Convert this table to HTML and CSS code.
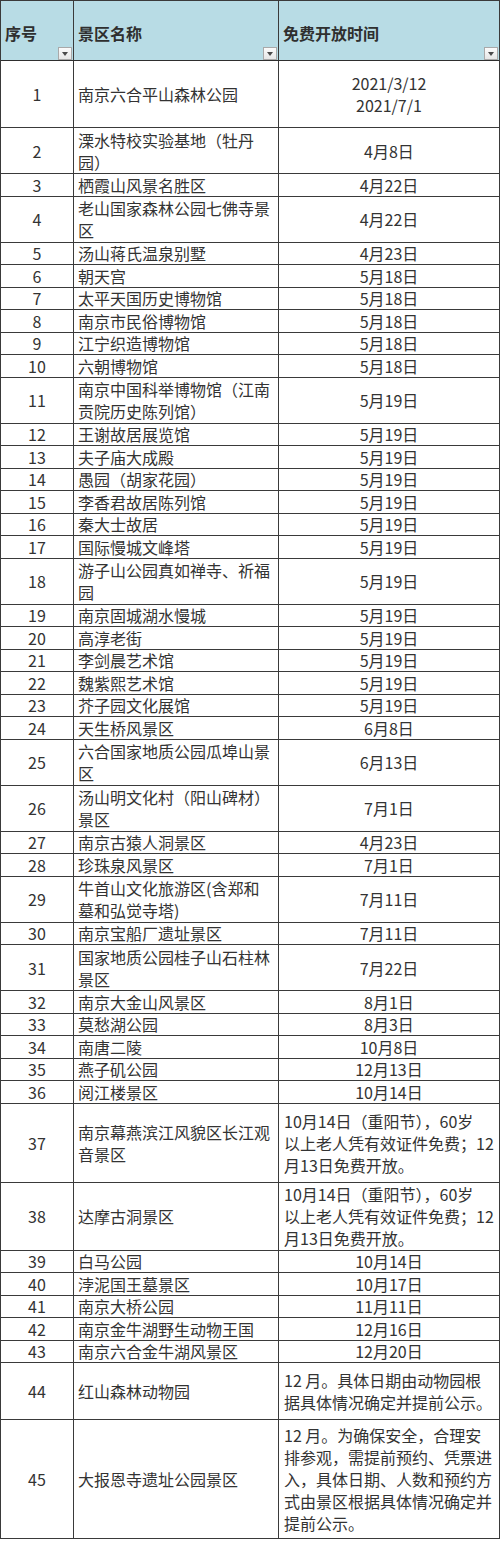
FILE: index.html
```html
<!DOCTYPE html>
<html lang="zh-CN">
<head>
<meta charset="utf-8">
<title>南京景区免费开放时间</title>
<link rel="stylesheet" href="styles.css">
</head>
<body>
<div class="table">
  <div class="row head">
    <div class="cell hc">序号<span class="filter"></span></div>
    <div class="cell hc">景区名称<span class="filter"></span></div>
    <div class="cell hc">免费开放时间<span class="filter"></span></div>
  </div>
  <div class="row h67"><div class="cell num">1</div><div class="cell name">南京六合平山森林公园</div><div class="cell date">2021/3/12<br>2021/7/1</div></div>
  <div class="row h2"><div class="cell num">2</div><div class="cell name">溧水特校实验基地（牡丹<br>园）</div><div class="cell date">4月8日</div></div>
  <div class="row"><div class="cell num">3</div><div class="cell name">栖霞山风景名胜区</div><div class="cell date">4月22日</div></div>
  <div class="row h2"><div class="cell num">4</div><div class="cell name">老山国家森林公园七佛寺景<br>区</div><div class="cell date">4月22日</div></div>
  <div class="row"><div class="cell num">5</div><div class="cell name">汤山蒋氏温泉别墅</div><div class="cell date">4月23日</div></div>
  <div class="row"><div class="cell num">6</div><div class="cell name">朝天宫</div><div class="cell date">5月18日</div></div>
  <div class="row"><div class="cell num">7</div><div class="cell name">太平天国历史博物馆</div><div class="cell date">5月18日</div></div>
  <div class="row"><div class="cell num">8</div><div class="cell name">南京市民俗博物馆</div><div class="cell date">5月18日</div></div>
  <div class="row"><div class="cell num">9</div><div class="cell name">江宁织造博物馆</div><div class="cell date">5月18日</div></div>
  <div class="row"><div class="cell num">10</div><div class="cell name">六朝博物馆</div><div class="cell date">5月18日</div></div>
  <div class="row h2"><div class="cell num">11</div><div class="cell name">南京中国科举博物馆（江南<br>贡院历史陈列馆）</div><div class="cell date">5月19日</div></div>
  <div class="row"><div class="cell num">12</div><div class="cell name">王谢故居展览馆</div><div class="cell date">5月19日</div></div>
  <div class="row"><div class="cell num">13</div><div class="cell name">夫子庙大成殿</div><div class="cell date">5月19日</div></div>
  <div class="row"><div class="cell num">14</div><div class="cell name">愚园（胡家花园）</div><div class="cell date">5月19日</div></div>
  <div class="row"><div class="cell num">15</div><div class="cell name">李香君故居陈列馆</div><div class="cell date">5月19日</div></div>
  <div class="row"><div class="cell num">16</div><div class="cell name">秦大士故居</div><div class="cell date">5月19日</div></div>
  <div class="row"><div class="cell num">17</div><div class="cell name">国际慢城文峰塔</div><div class="cell date">5月19日</div></div>
  <div class="row h2"><div class="cell num">18</div><div class="cell name">游子山公园真如禅寺、祈福<br>园</div><div class="cell date">5月19日</div></div>
  <div class="row"><div class="cell num">19</div><div class="cell name">南京固城湖水慢城</div><div class="cell date">5月19日</div></div>
  <div class="row"><div class="cell num">20</div><div class="cell name">高淳老街</div><div class="cell date">5月19日</div></div>
  <div class="row"><div class="cell num">21</div><div class="cell name">李剑晨艺术馆</div><div class="cell date">5月19日</div></div>
  <div class="row"><div class="cell num">22</div><div class="cell name">魏紫熙艺术馆</div><div class="cell date">5月19日</div></div>
  <div class="row"><div class="cell num">23</div><div class="cell name">芥子园文化展馆</div><div class="cell date">5月19日</div></div>
  <div class="row"><div class="cell num">24</div><div class="cell name">天生桥风景区</div><div class="cell date">6月8日</div></div>
  <div class="row h2"><div class="cell num">25</div><div class="cell name">六合国家地质公园瓜埠山景<br>区</div><div class="cell date">6月13日</div></div>
  <div class="row h2"><div class="cell num">26</div><div class="cell name">汤山明文化村（阳山碑材）<br>景区</div><div class="cell date">7月1日</div></div>
  <div class="row"><div class="cell num">27</div><div class="cell name">南京古猿人洞景区</div><div class="cell date">4月23日</div></div>
  <div class="row"><div class="cell num">28</div><div class="cell name">珍珠泉风景区</div><div class="cell date">7月1日</div></div>
  <div class="row h2"><div class="cell num">29</div><div class="cell name">牛首山文化旅游区(含郑和<br>墓和弘觉寺塔)</div><div class="cell date">7月11日</div></div>
  <div class="row"><div class="cell num">30</div><div class="cell name">南京宝船厂遗址景区</div><div class="cell date">7月11日</div></div>
  <div class="row h2"><div class="cell num">31</div><div class="cell name">国家地质公园桂子山石柱林<br>景区</div><div class="cell date">7月22日</div></div>
  <div class="row"><div class="cell num">32</div><div class="cell name">南京大金山风景区</div><div class="cell date">8月1日</div></div>
  <div class="row"><div class="cell num">33</div><div class="cell name">莫愁湖公园</div><div class="cell date">8月3日</div></div>
  <div class="row"><div class="cell num">34</div><div class="cell name">南唐二陵</div><div class="cell date">10月8日</div></div>
  <div class="row"><div class="cell num">35</div><div class="cell name">燕子矶公园</div><div class="cell date">12月13日</div></div>
  <div class="row"><div class="cell num">36</div><div class="cell name">阅江楼景区</div><div class="cell date">10月14日</div></div>
  <div class="row h79"><div class="cell num">37</div><div class="cell name">南京幕燕滨江风貌区长江观<br>音景区</div><div class="cell note">10月14日（重阳节），60岁<br>以上老人凭有效证件免费；12<br>月13日免费开放。</div></div>
  <div class="row h68"><div class="cell num">38</div><div class="cell name">达摩古洞景区</div><div class="cell note">10月14日（重阳节），60岁<br>以上老人凭有效证件免费；12<br>月13日免费开放。</div></div>
  <div class="row"><div class="cell num">39</div><div class="cell name">白马公园</div><div class="cell date">10月14日</div></div>
  <div class="row"><div class="cell num">40</div><div class="cell name">浡泥国王墓景区</div><div class="cell date">10月17日</div></div>
  <div class="row"><div class="cell num">41</div><div class="cell name">南京大桥公园</div><div class="cell date">11月11日</div></div>
  <div class="row"><div class="cell num">42</div><div class="cell name">南京金牛湖野生动物王国</div><div class="cell date">12月16日</div></div>
  <div class="row"><div class="cell num">43</div><div class="cell name">南京六合金牛湖风景区</div><div class="cell date">12月20日</div></div>
  <div class="row h57"><div class="cell num">44</div><div class="cell name">红山森林动物园</div><div class="cell note">12&nbsp;月。具体日期由动物园根<br>据具体情况确定并提前公示。</div></div>
  <div class="row h119"><div class="cell num">45</div><div class="cell name">大报恩寺遗址公园景区</div><div class="cell note">12&nbsp;月。为确保安全，合理安<br>排参观，需提前预约、凭票进<br>入，具体日期、人数和预约方<br>式由景区根据具体情况确定并<br>提前公示。</div></div>
</div>
</body>
</html>
```

FILE: styles.css
```css
html, body {
  margin: 0;
  padding: 0;
  background: #ffffff;
}

body {
  font-family: "Noto Sans CJK SC", "Noto Sans", sans-serif;
  font-size: 16px;
  color: #333333;
}

.table {
  width: 500px;
  box-sizing: border-box;
  border-left: 1px solid #3a3a3a;
  border-right: 1px solid #3a3a3a;
  border-top: 1px solid #3a3a3a;
}

.row {
  display: grid;
  grid-template-columns: 73px 205px 1fr;
  height: 22.5px;
  box-sizing: border-box;
  border-bottom: 1px solid #3a3a3a;
}

.row.h2 { height: 46px; }
.row.h67 { height: 67px; }
.row.h79 { height: 79px; }
.row.h68 { height: 68px; }
.row.h57 { height: 57px; }
.row.h119 { height: 119px; }

.row.head {
  height: 60px;
  background: #b8dce5;
  border-bottom: 1.5px solid #2e2e2e;
}

.cell {
  box-sizing: border-box;
  display: flex;
  align-items: center;
  line-height: 22px;
  white-space: nowrap;
  min-height: 0;
}

.cell:not(:last-child) {
  border-right: 1px solid #3a3a3a;
}

.hc {
  position: relative;
  font-weight: bold;
  padding: 4px 0 0 4px;
  color: #2f2f2f;
}

.filter {
  position: absolute;
  right: 1px;
  bottom: 0;
  width: 14px;
  height: 13px;
  box-sizing: border-box;
  background: linear-gradient(#fbfbfb, #e6e6e6);
  border: 1px solid #a9a9a9;
}

.filter::after {
  content: "";
  position: absolute;
  left: 3px;
  top: 4px;
  border-left: 3.5px solid transparent;
  border-right: 3.5px solid transparent;
  border-top: 4px solid #4a4a4a;
}

.num {
  justify-content: center;
}

.name {
  padding-left: 4px;
}

.date {
  justify-content: center;
  text-align: center;
}

.note {
  padding-left: 5px;
}
```
